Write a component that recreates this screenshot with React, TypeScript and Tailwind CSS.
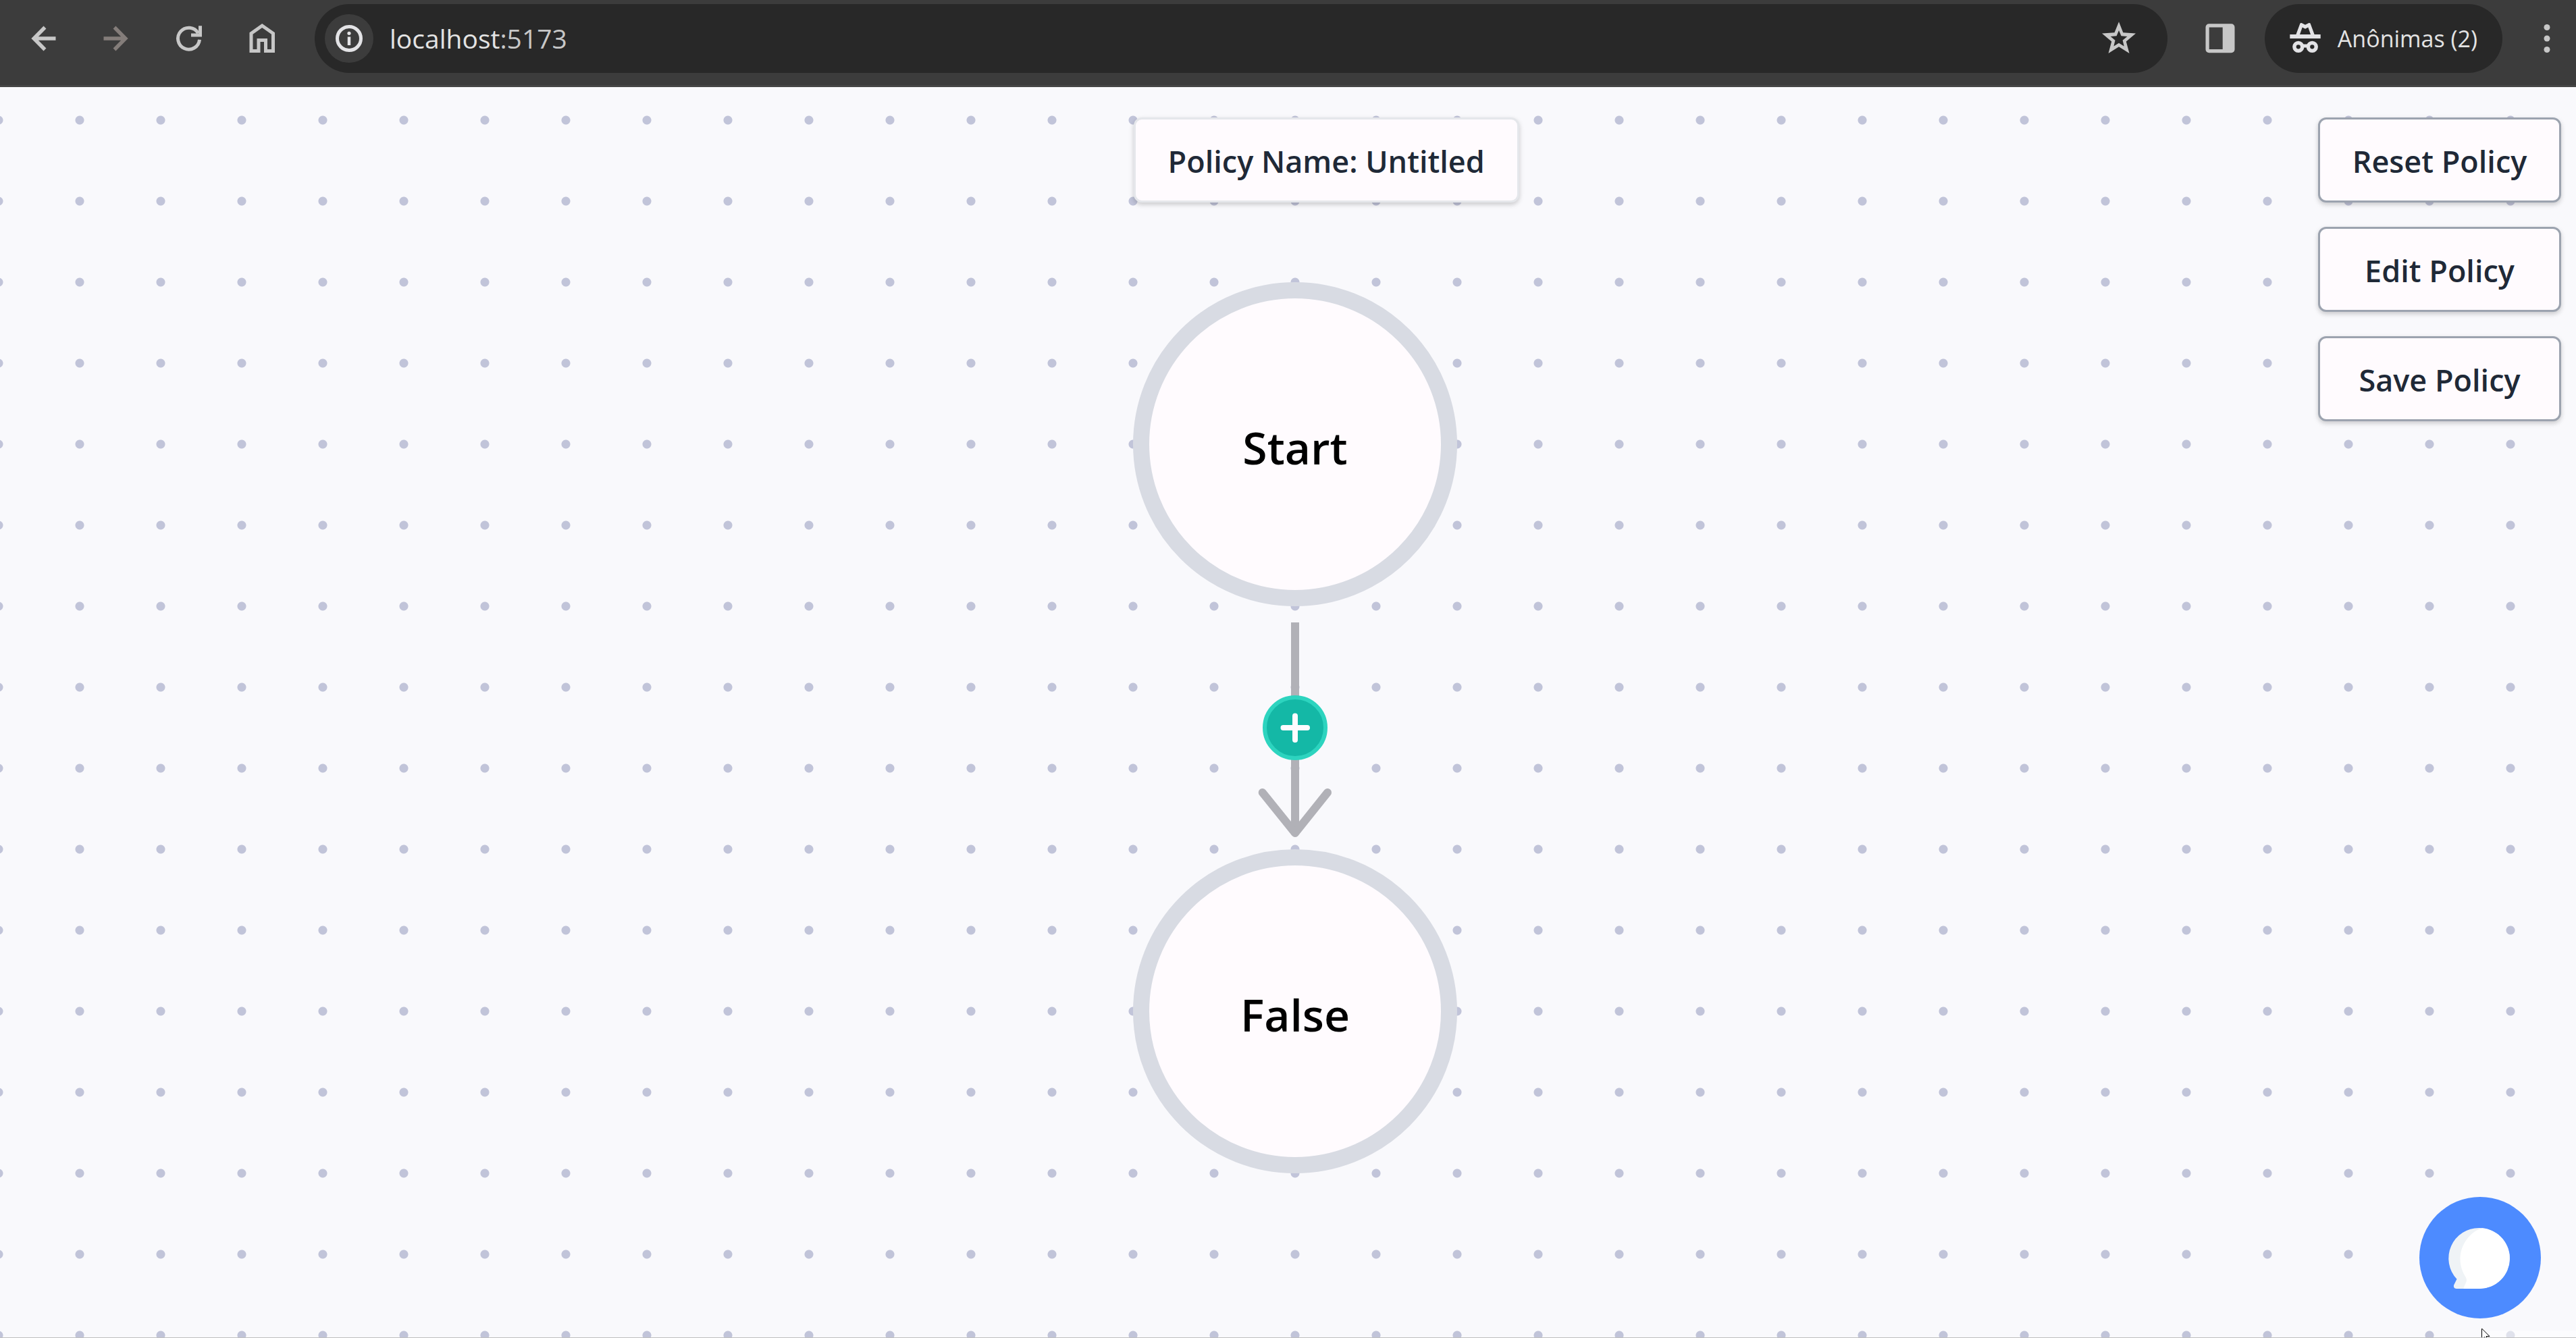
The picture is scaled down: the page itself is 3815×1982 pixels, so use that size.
import type { ReactNode } from 'react';

function ToolbarButton({ label, children, className = 'w-[102px]' }: { label: string; children: ReactNode; className?: string }) {
  return (
    <button type="button" aria-label={label} className={`flex h-[102px] shrink-0 items-center justify-center rounded-full ${className}`}>
      {children}
    </button>
  );
}

function Icon({ children, className = 'text-[#c7c7c7]' }: { children: ReactNode; className?: string }) {
  return (
    <svg viewBox="0 0 60 60" className={`size-[60px] shrink-0 ${className}`} fill="none" stroke="currentColor" strokeWidth="5" aria-hidden="true">
      {children}
    </svg>
  );
}

function BrowserToolbar() {
  return (
    <header className="flex h-[129px] shrink-0 items-start border-b-3 border-[#454545] bg-[#3c3c3c] pt-1.5 pl-[13px]">
      <nav className="mr-[27px] flex gap-1.5" aria-label="Browser navigation">
        <ToolbarButton label="Back">
          <Icon>
            <path d="M32.5 13.5 16.2 30l16.3 16.500M17 30h31.500" strokeWidth="5.500" />
          </Icon>
        </ToolbarButton>
        <ToolbarButton label="Forward">
          <Icon className="text-[#847d7a]">
            <path d="M27.500 13.500 43.800 30 27.500 46.500M43 30H11.500" strokeWidth="5.500" />
          </Icon>
        </ToolbarButton>
        <ToolbarButton label="Reload">
          <Icon>
            <path d="M45.500 31.700A16 16 0 1 1 43.500 22.300" />
            <path d="M46.500 11.300V25H33" />
          </Icon>
        </ToolbarButton>
        <ToolbarButton label="Home">
          <Icon>
            <path d="M14 48.500V22.500L30.200 11 46.500 22.500V48.500H35.500V32.500H25V48.500Z" />
          </Icon>
        </ToolbarButton>
      </nav>

      <div className="mr-[27px] flex h-[102px] min-w-0 flex-1 items-center rounded-full bg-[#282828] pl-[15px] pr-[42px]">
        <button type="button" aria-label="Site information" className="flex size-[72px] shrink-0 items-center justify-center rounded-full bg-[#3c3c3c]">
          <Icon className="text-[#e3e3e6]">
            <circle cx="30" cy="30" r="17.500" />
            <circle cx="30" cy="22.300" r="2.600" fill="currentColor" stroke="none" />
            <path d="M30 27.500v12.500" strokeWidth="4.500" />
          </Icon>
        </button>
        <div className="ml-6 min-w-0 flex-1 text-[39px] leading-[60px] text-[#e3e3e3]">
          localhost<span className="text-[#c7c7c7]">:5173</span>
        </div>
        <button type="button" aria-label="Bookmark this tab" className="shrink-0">
          <Icon>
            <path
              fill="currentColor"
              fillRule="evenodd"
              stroke="none"
              d="M30 5.300 36.300 21.200 55 22.500 40.800 34.500 45.500 52 30 42.300 14.500 52 19.200 34.500 5 22.500 23.500 21.200ZM30 18 26.600 26.200 17.700 26.900 24.500 32.700 22.400 41.400 30 36.700 37.700 41.400 35.600 32.700 42.400 26.900 33.500 26.200Z"
            />
          </Icon>
        </button>
      </div>

      <ToolbarButton label="Side panel">
        <Icon>
          <path
            fill="currentColor"
            fillRule="evenodd"
            stroke="none"
            d="M13.500 8.300h33a5 5 0 0 1 5 5v33a5 5 0 0 1-5 5h-33a5 5 0 0 1-5-5v-33a5 5 0 0 1 5-5ZM13.700 13.500v32.500h20v-32.500Z"
          />
        </Icon>
      </ToolbarButton>

      <button type="button" className="ml-[15px] flex h-[102px] shrink-0 items-center gap-[18px] rounded-full bg-[#282828] pr-[37px] pl-[30px] text-[34px] text-[#e3e3e3]">
        <Icon className="text-[#e3e3e6]">
          <g fill="currentColor" stroke="none">
            <path
              fillRule="evenodd"
              d="M22.500 7.500c.7-.7 1.700-.8 2.600-.3l4.900 2.600 4.900-2.600c.9-.5 1.900-.4 2.600.3L43.600 24H52.700v6H7.300v-6h9.100ZM22 24h16l-3.700-10.500-4.300 2.300-4.300-2.300Z"
            />
          </g>
          <circle cx="19.800" cy="42.300" r="5.900" strokeWidth="5.500" />
          <circle cx="40.300" cy="42.300" r="5.900" strokeWidth="5.500" />
          <path d="M25 41h10" strokeWidth="5" />
        </Icon>
        <span>Anônimas (2)</span>
      </button>

      <ToolbarButton label="Browser menu" className="ml-[23px] w-[86px]">
        <Icon>
          <g fill="currentColor" stroke="none">
            <circle cx="30" cy="13.500" r="4.500" />
            <circle cx="30" cy="30" r="4.500" />
            <circle cx="30" cy="46.500" r="4.500" />
          </g>
        </Icon>
      </ToolbarButton>
    </header>
  );
}

function PolicyNode({ label }: { label: string }) {
  return (
    <div className="flex size-[480px] items-center justify-center rounded-full border-24 border-[#d8dbe3] bg-[#fffbfe] pt-2 text-[66px] leading-[108px] font-semibold text-black">
      {label}
    </div>
  );
}

function PolicyEdge() {
  return (
    <div className="relative flex h-[360px] w-[120px] items-center justify-center">
      <svg viewBox="0 0 120 360" className="absolute inset-0 size-full" fill="none" stroke="#b1b1b7" strokeWidth="12" aria-hidden="true">
        <path d="M60 24V336" />
        <path d="M11.700 276 60 336 108 276" strokeLinecap="round" strokeLinejoin="round" />
      </svg>
      <button type="button" aria-label="Add step" className="relative flex size-24 items-center justify-center rounded-full border-6 border-[#2dd4bf] bg-[#14b8a6]">
        <svg viewBox="0 0 48 48" className="size-12" fill="none" stroke="#fffbfe" strokeWidth="8" strokeLinecap="round" aria-hidden="true">
          <path d="M24 6.500v35.500M6.500 24h35.500" />
        </svg>
      </button>
    </div>
  );
}

function PolicyAction({ children }: { children: ReactNode }) {
  return (
    <button type="button" className="rounded-xl border-3 border-[#9ca3af] bg-[#fffbfe] pt-[26px] pb-[22px] text-center shadow-[0_3px_9px_rgba(0,0,0,0.1),0_3px_6px_rgba(0,0,0,0.1)]">
      {children}
    </button>
  );
}

function ChatBubble() {
  return (
    <svg viewBox="0 0 180 180" className="size-full" aria-hidden="true">
      <path fill="#eff3f6" d="M89 46A45 45 0 0 1 89 136H55c-3.200 0-5-3-3.600-6L55.500 121.800A45 45 0 0 1 89 46Z" />
      <path fill="#fff" d="M93 46.200A45 45 0 0 1 89 136H65.500c.3-4 4.500-9 4.500-13 0-5-9.500-13-9.500-31C60.500 70 76 51 93 46.200Z" />
    </svg>
  );
}

export default function App() {
  return (
    <div className="flex h-screen flex-col overflow-hidden font-['Open_Sans','Noto_Sans',sans-serif]">
      <BrowserToolbar />
      <main className="relative flex-1 overflow-hidden border-b border-[#bfbfbf] bg-[#f9f9fc] bg-[radial-gradient(circle,#c1c4d9_6px,transparent_7px)] bg-[size:120px_120px] bg-[position:58px_-11px] text-[45px] leading-[72px] font-semibold text-[#1f2937]">
        <div className="absolute top-[289px] left-[1678px] flex flex-col items-center">
          <PolicyNode label="Start" />
          <PolicyEdge />
          <PolicyNode label="False" />
        </div>

        <h1 className="absolute top-[45px] left-[44%] rounded-xl border-3 border-[#e5e7eb] bg-[#fffbfe] px-12 pt-[26px] pb-[22px] whitespace-nowrap shadow-[0_3px_9px_rgba(0,0,0,0.1),0_3px_6px_rgba(0,0,0,0.1)]">
          Policy Name: Untitled
        </h1>

        <div className="absolute top-[45px] right-[22px] flex w-[360px] flex-col gap-9">
          <PolicyAction>Reset Policy</PolicyAction>
          <PolicyAction>Edit Policy</PolicyAction>
          <PolicyAction>Save Policy</PolicyAction>
        </div>

        <button type="button" aria-label="Open chat" className="absolute right-[52px] bottom-7 size-[180px] rounded-full bg-[#4d8bff]">
          <ChatBubble />
        </button>

        <div className="absolute right-0 bottom-0 h-2.5 w-32 bg-white/50" />
        <svg viewBox="0 0 14 22" className="absolute right-[126px] -bottom-2 h-[22px] w-3.5" aria-hidden="true">
          <path d="M.5 1v16l4-3.500 3 6.500 2.500-1-3-6.500h5Z" fill="#fff" stroke="#000" />
        </svg>
      </main>
    </div>
  );
}
